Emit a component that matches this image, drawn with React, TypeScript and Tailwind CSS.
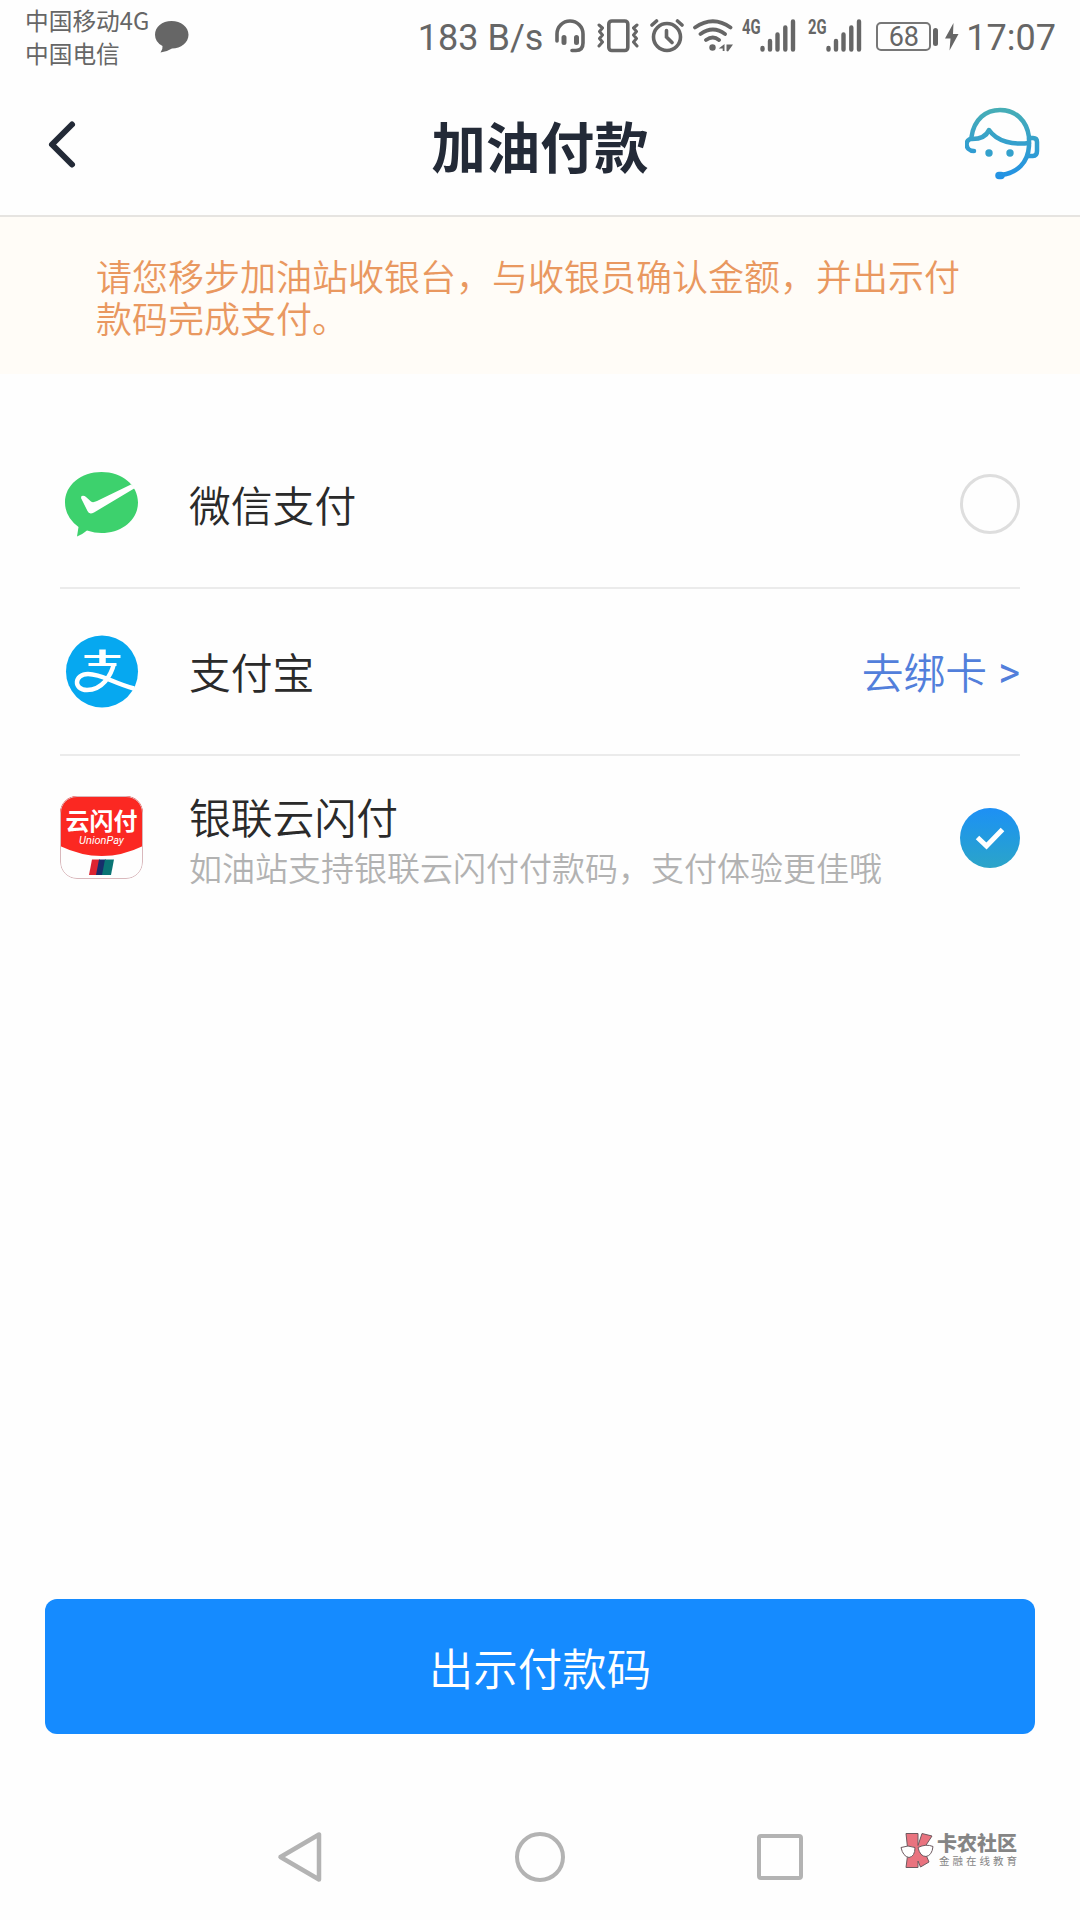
import { useState } from "react";

// --- Status bar icons ---
const HeadsetIcon = () => (
  <svg width="30" height="34" viewBox="0 0 30 34" fill="none" stroke="#666" strokeWidth="3.6" strokeLinecap="round">
    <path d="M2 22V15a13 13 0 0 1 26 0V24q0 7.500-7 7.500H17" />
    <path d="M9 18.500v5M21.500 18.500v5" strokeWidth="5" />
  </svg>
);

const VibrateIcon = () => (
  <svg width="42" height="34" viewBox="0 0 42 34" fill="none" stroke="#666" strokeWidth="3.600" strokeLinecap="round" strokeLinejoin="round">
    <rect x="11.800" y="2" width="19" height="29.500" rx="3" />
    <path d="M2 6l3.500 3-3 3.500 3 3.500-3 3.500 3 3.500L2 27M40 6l-3.500 3 3 3.500-3 3.500 3 3.500-3 3.500L40 27" strokeWidth="3" />
  </svg>
);

const AlarmIcon = () => (
  <svg width="34" height="34" viewBox="0 0 34 34" fill="none" stroke="#666" strokeWidth="3.600" strokeLinecap="round">
    <circle cx="17" cy="18" r="13.500" />
    <path d="M16.500 11.500v6.500l5.500 5.500M2 6l4.500-4M32 6l-4.500-4" />
  </svg>
);

const WifiIcon = () => (
  <svg width="40" height="34" viewBox="0 0 40 34" fill="none" stroke="#666" strokeWidth="3.800" strokeLinecap="round">
    <path d="M2 8.500Q20-4 37.500 8.500M7.500 15Q20 6 32 15M13 21Q20 16 26 21" />
    <circle cx="19.500" cy="28.500" r="3.200" fill="#666" stroke="none" />
    <path d="M31.500 25v7h-1.800v-2.500h-4zM33.500 32v-6.500h6.500l-5 7z" fill="#666" stroke="none" />
  </svg>
);

const Signal = ({ label }: { label: string }) => (
  <div className="flex h-[34px] w-[55px] items-start">
    <span className="ml-px w-[18px] origin-left scale-x-[0.740] text-[20px] font-bold leading-[16px]">{label}</span>
    <svg width="36" height="34" viewBox="0 0 36 34" stroke="#666" strokeWidth="4.400" strokeLinecap="round">
      <path d="M2.500 29v1.500M10 22v8.500M17.500 15.500v15M25.300 8.500v22M33 2.500v28" />
    </svg>
  </div>
);

const StatusBar = () => (
  <div className="flex h-[73px] justify-between pl-[25px] pr-[24px] text-[#666]">
    <div className="flex">
      <div className="pt-[4px] text-[23.700px] leading-[33px]">
        <p>中国移动4G</p>
        <p>中国电信</p>
      </div>
      <svg className="ml-[5px] mt-[20px]" width="36" height="34" viewBox="0 0 36 34">
        <path
          d="M17.500 1C27 1 34.500 7 34.500 14.700S27 28.500 18 28.500Q13.500 31.500 6.500 32.500 9 29.500 8.500 26 1 22 1 14.700C1 7 8 1 17.500 1z"
          fill="#666"
        />
      </svg>
    </div>
    <div className="flex items-start pt-[19px]">
      <span className="mr-[12px] font-[Roboto] text-[36px] leading-[38px]">183 B/s</span>
      <HeadsetIcon />
      <span className="ml-[12px] flex">
        <VibrateIcon />
      </span>
      <span className="ml-[11px] flex">
        <AlarmIcon />
      </span>
      <span className="ml-[9px] flex">
        <WifiIcon />
      </span>
      <div className="ml-[8px] flex gap-[11px] font-[Roboto]">
        <Signal label="4G" />
        <Signal label="2G" />
      </div>
      <div className="ml-[14px] mt-[3px] flex items-center font-[Roboto]">
        <span className="flex h-[29px] w-[55px] items-center justify-center rounded-[5px] border-2 border-[#777] pt-px text-[27px] leading-none">
          68
        </span>
        <span className="ml-[2px] h-[18px] w-[5px] rounded-full bg-[#666]" />
      </div>
      <svg className="ml-[7px] mt-[4px]" width="14" height="28" viewBox="0 0 14 28">
        <path d="M8.500 0L0 15.500h5.500L4.500 27.500 13.500 11H8z" fill="#666" />
      </svg>
      <span className="ml-[7px] font-[Roboto] text-[36px] leading-[38px]">17:07</span>
    </div>
  </div>
);

// --- Header ---
const ServiceIcon = () => (
  <svg width="76" height="76" viewBox="0 0 76 76" fill="none">
    <defs>
      <linearGradient id="service" x1="0" y1="0" x2="0" y2="76" gradientUnits="userSpaceOnUse">
        <stop offset="0" stopColor="#47aeb4" />
        <stop offset="1" stopColor="#2090e8" />
      </linearGradient>
    </defs>
    <g stroke="url(#service)" strokeWidth="4.500" strokeLinecap="round" strokeLinejoin="round">
      <path d="M6.500 30C9 12 21 3 35 3c16 0 27 11 29 27v9c-1 17-12 27-28 29" />
      <path d="M9 44C-1 44 0 31 7 32c8 0 14-2 17-9 8 12 25 15 40 13" />
      <path d="M64 31h4q4 0 4 4v9q0 5-4 5h-5" />
      <path d="M34 68.500h2" strokeWidth="7.500" />
    </g>
    <circle cx="24" cy="46" r="3.700" fill="#34a1cc" />
    <circle cx="45" cy="46" r="3.700" fill="#34a1cc" />
  </svg>
);

const Header = () => (
  <header className="flex h-[144px] items-start justify-between border-b-2 border-[#e6e4e1] pl-[46px] pr-[37px]">
    <button className="mt-[46px] w-[69px]" title="返回">
      <svg width="32" height="50" viewBox="0 0 32 50" fill="none" stroke="#232a37" strokeWidth="6" strokeLinecap="round" strokeLinejoin="round">
        <path d="M26 5.500L6 25.500l20 20" />
      </svg>
    </button>
    <h1 className="mt-[32px] text-[54.300px] font-bold leading-[80px] text-[#232a37]">加油付款</h1>
    <button className="mt-[34px] w-[78px]" title="客服">
      <ServiceIcon />
    </button>
  </header>
);

// --- Payment icons ---
const WechatIcon = () => (
  <svg className="mt-[2px]" width="83" height="83" viewBox="0 0 83 83">
    <path
      d="M41.500 9C62 9 78 22 78 39.500S62 70 41.500 70Q35 70 27 67.500 23 71 17 73.500L18.500 64Q5 54 5 39.500C5 22 21 9 41.500 9z"
      fill="#3dd16d"
    />
    <path d="M21.500 33Q24 32 26 34L31 38.500Q33 40 37 38L71 21.500 75 25 34 49.500Q29 52 27.500 48L21 35z" fill="#fff" />
  </svg>
);

const AlipayIcon = () => (
  <svg width="83" height="83" viewBox="0 0 83 83" fill="none" stroke="#fff">
    <circle cx="42" cy="41.500" r="36" fill="#06a8f0" stroke="none" />
    <path d="M24.500 26.500h36M28.500 34.500h28" strokeWidth="2.800" />
    <path d="M42.500 19.500v15" strokeWidth="6.500" />
    <path d="M54 33.500C51 46 42 60 27 60c-14 0-13-16 1-16 14 0 25 9 46 14.500" strokeWidth="4.500" />
  </svg>
);

const UnionPayIcon = () => (
  <div className="relative h-[83px] w-[83px] overflow-hidden rounded-[17px]">
    <svg width="83" height="83" viewBox="0 0 83 83">
      <path d="M0 0h83v50Q42 70 0 50z" fill="#fb2822" />
      <path d="M32 63.500h8l-3 15.500h-8z" fill="#dc2431" />
      <path d="M39 63.500h7l-3 15.500h-7z" fill="#172f6b" />
      <path d="M45 63.500h9l-3 15.500h-9z" fill="#0a7474" />
      <rect x="0.500" y="0.500" width="82" height="82" rx="16.500" fill="none" stroke="#d9b8bc" />
    </svg>
    <div className="absolute inset-x-0 top-[10px] text-center text-[#fff]">
      <p className="whitespace-nowrap text-[24px] font-bold leading-[28px]">云闪付</p>
      <p className="pt-px font-[Roboto] text-[11px] font-normal italic leading-[12px]">UnionPay</p>
    </div>
  </div>
);

const Radio = ({ checked }: { checked: boolean }) =>
  checked ? (
    <span className="flex h-[60px] w-[60px] rounded-full bg-gradient-to-b from-[#1e90f5] to-[#2ca4c8]">
      <svg width="60" height="60" viewBox="0 0 60 60" fill="none" stroke="#fff" strokeWidth="5">
        <path d="M17.500 29.500l9 8.500L42.500 21.500" />
      </svg>
    </span>
  ) : (
    <span className="h-[60px] w-[60px] rounded-full border-[3px] border-[#dedede]" />
  );

const WatermarkLogo = () => (
  <div className="flex text-[#858585]">
    <svg width="34" height="38" viewBox="0 0 34 38" stroke="#6e5a60" strokeWidth="1">
      <path d="M6 1.500h12v12L22 1.500l10 2.500-8.500 13L29 30l-8.500 5L18 29v6.500H6L8 20z" fill="#e9737f" />
      <path d="M1 15.500q7-3 14 0 0 9-6 10-6-1-8-10zM18 15.500q8-4 15-1-1 9-7 10-6 0-8-9z" fill="#fff" />
    </svg>
    <div className="ml-[3px]">
      <p className="text-[20px] font-black leading-[22px]">卡农社区</p>
      <p className="pl-[2px] text-[10.500px] leading-[14px] tracking-[3px]">金融在线教育</p>
    </div>
  </div>
);

export default function App() {
  const [selected, setSelected] = useState("unionpay");

  return (
    <div className="flex h-[1920px] w-[1080px] flex-col overflow-hidden bg-[#fefefe] font-['Noto_Sans_CJK_SC',sans-serif]">
      <StatusBar />
      <Header />

      {/* Notice */}
      <div className="h-[157px] bg-[#fffcf7] px-[96px] pt-[37px] text-[36px] font-[350] leading-[42px] text-[#e99860]">
        <p>请您移步加油站收银台，与收银员确认金额，并出示付</p>
        <p>款码完成支付。</p>
      </div>

      {/* Payment methods */}
      <div className="mx-[60px] mt-[46px] text-[41.800px] font-[350] text-[#2a2a2a]">
        <div
          className="flex h-[169px] items-center border-b-2 border-[#ebebeb]"
          onClick={() => setSelected("wechat")}
        >
          <WechatIcon />
          <p className="ml-[46px] flex-1 pt-[2px]">微信支付</p>
          <Radio checked={selected === "wechat"} />
        </div>
        <div className="flex h-[167px] items-center border-b-2 border-[#ebebeb]">
          <AlipayIcon />
          <p className="ml-[46px] flex-1">支付宝</p>
          <a className="flex items-center text-[#527fdb]">
            去绑卡
            <span className="ml-[11px] pt-[4px] font-[Roboto] font-normal">&gt;</span>
          </a>
        </div>
        <div className="flex h-[163px] items-center" onClick={() => setSelected("unionpay")}>
          <UnionPayIcon />
          <div className="ml-[46px] flex-1 pt-[6px]">
            <p className="leading-[53px]">银联云闪付</p>
            <p className="whitespace-nowrap text-[33px] leading-[48px] text-[#b2b2b2]">
              如油站支持银联云闪付付款码，支付体验更佳哦
            </p>
          </div>
          <Radio checked={selected === "unionpay"} />
        </div>
      </div>

      <button className="mx-[45px] mt-auto h-[135px] rounded-[12px] bg-[#158bff] pt-px text-[44.500px] font-[350] text-white">
        出示付款码
      </button>

      {/* System navigation */}
      <div className="mt-[65px] flex h-[121px] items-start pl-[276px]">
        <svg className="mt-[31px]" width="48" height="54" viewBox="0 0 48 54" fill="none" stroke="#b3b3b3" strokeWidth="4.500" strokeLinejoin="round">
          <path d="M43 4.500v45L4.500 27z" />
        </svg>
        <span className="ml-[191px] mt-[33px] h-[50px] w-[50px] rounded-full border-[4.500px] border-[#b3b3b3]" />
        <span className="ml-[192px] mt-[35px] h-[46px] w-[46px] rounded-[4px] border-[4.500px] border-[#b3b3b3]" />
        <div className="ml-[97px] mt-[33px]">
          <WatermarkLogo />
        </div>
      </div>
    </div>
  );
}
